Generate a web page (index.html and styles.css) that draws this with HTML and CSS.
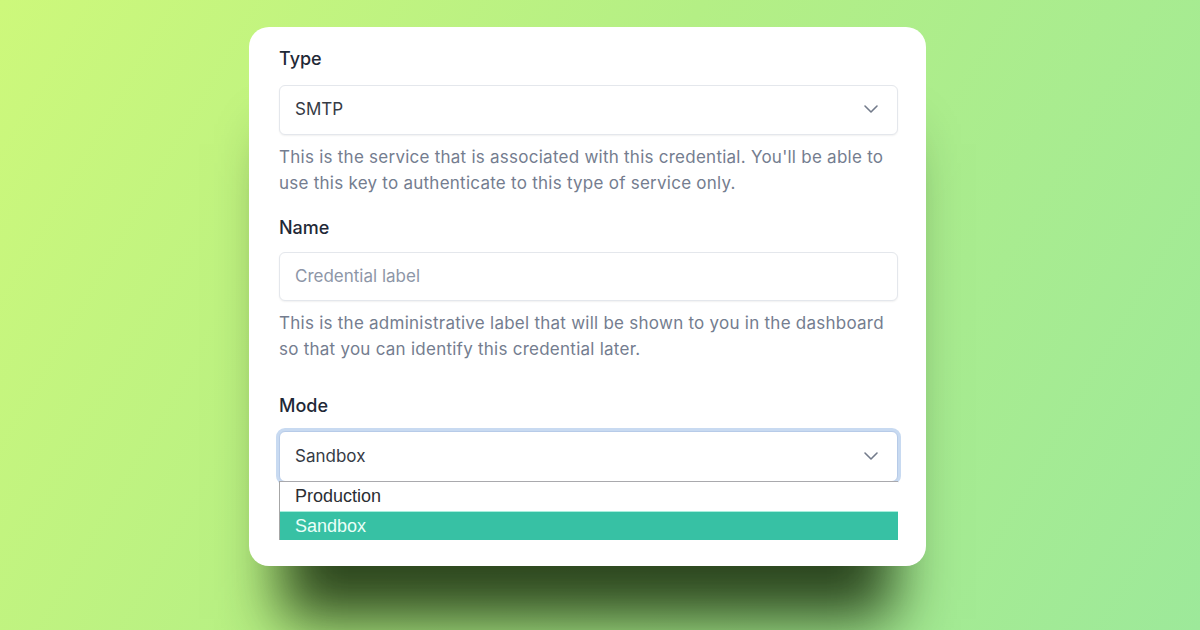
FILE: index.html
```html
<!DOCTYPE html>
<html lang="en">
<head>
<meta charset="utf-8">
<title>Credential form</title>
<link rel="stylesheet" href="styles.css">
</head>
<body>
<div class="page">
  <form class="card">
    <div class="field field-type">
      <label class="label">Type</label>
      <div class="select">
        <span class="value">SMTP</span>
        <svg class="chev" viewBox="0 0 24 24" width="24" height="24"><polyline points="6 9 12 15 18 9"/></svg>
      </div>
      <p class="help">This is the service that is associated with this credential. You'll be able to use this key to authenticate to this type of service only.</p>
    </div>
    <div class="field field-name">
      <label class="label">Name</label>
      <div class="select input">
        <span class="placeholder">Credential label</span>
      </div>
      <p class="help">This is the administrative label that will be shown to you in the dashboard so that you can identify this credential later.</p>
    </div>
    <div class="field field-mode">
      <label class="label">Mode</label>
      <div class="select-wrap">
        <div class="select focused">
          <span class="value">Sandbox</span>
          <svg class="chev" viewBox="0 0 24 24" width="24" height="24"><polyline points="6 9 12 15 18 9"/></svg>
        </div>
        <ul class="menu">
          <li class="opt">Production</li>
          <li class="opt selected">Sandbox</li>
        </ul>
      </div>
    </div>
  </form>
</div>
</body>
</html>
```

FILE: styles.css
```css
* { box-sizing: border-box; }
html, body { margin: 0; padding: 0; }
body {
  width: 1200px;
  height: 630px;
  overflow: hidden;
  background: linear-gradient(120deg, #cdf87b 0%, #b4ef85 45%, #9de99a 100%);
  font-family: Inter, "Noto Sans", sans-serif;
}
.page {
  padding: 27px 0 0 249px;
}
.card {
  width: 677px;
  height: 539px;
  background: #fff;
  border-radius: 20px;
  padding: 20px 28px 0 30px;
  box-shadow: 0 85px 55px -32px rgba(25, 45, 15, 0.88);
  margin: 0;
}
.field { display: flex; flex-direction: column; }
.label {
  font-size: 18px;
  line-height: 24px;
  font-weight: 500;
  color: #1f2937;
}
.select {
  height: 50px;
  margin-top: 14px;
  border: 1px solid #e4e7ec;
  border-radius: 6px;
  box-shadow: 0 1px 2px rgba(0, 0, 0, 0.06);
  display: flex;
  align-items: center;
  justify-content: space-between;
  padding: 0 14px 2px 15px;
  font-size: 17px;
  color: #363b45;
  background: #fff;
}
.input { height: 49px; margin-top: 12px; }
.placeholder { color: #8d96a7; }
.chev {
  fill: none;
  stroke: #737b8b;
  stroke-width: 1.6;
  stroke-linecap: round;
  stroke-linejoin: round;
}
.help {
  margin: 9px 0 0;
  font-size: 17px;
  letter-spacing: 0.25px;
  line-height: 26px;
  color: #747d8f;
}
.field-name { margin-top: 20px; }
.field-mode { margin-top: 32px; }
.select-wrap { position: relative; margin-top: 13px; }
.select.focused {
  margin-top: 0;
  height: 51px;
  border-color: #b7cbe8;
  box-shadow: 0 0 0 3px #c8daf1;
}
.menu {
  position: absolute;
  left: 0;
  right: 0;
  top: 50px;
  margin: 0;
  padding: 0;
  list-style: none;
  background: #fff;
  border-top: 1px solid #a9a9ad;
  border-left: 1px solid #a6a6a6;
  font-family: "Liberation Sans", Arial, sans-serif;
  font-size: 18px;
  z-index: 2;
}
.opt {
  height: 29px;
  line-height: 29px;
  padding-left: 15px;
  color: #2b2e33;
}
.opt.selected {
  background: #37c1a4;
  color: #eafff8;
  border-top: 1px solid #a8eedc;
  line-height: 28px;
}
```
